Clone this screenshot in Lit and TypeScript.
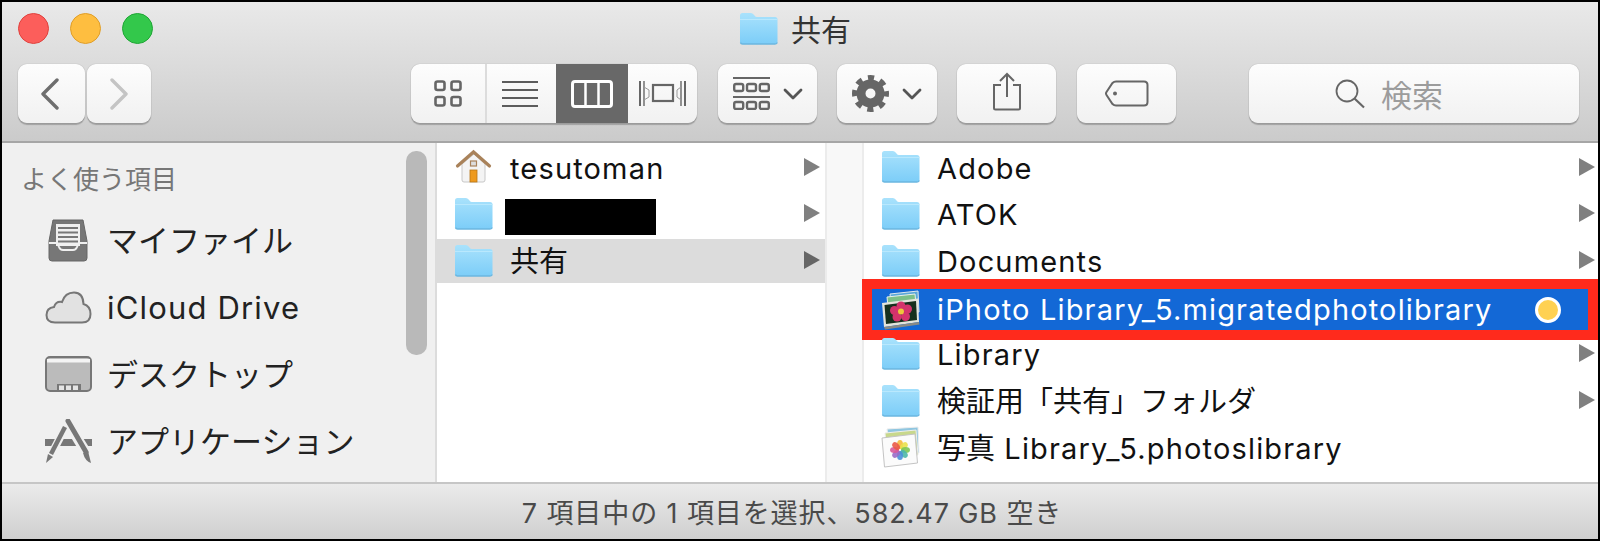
import { LitElement, html, svg, css } from "lit";
import { customElement } from "lit/decorators.js";

const folderIcon = html`<svg class="icon" width="39" height="33" viewBox="0 0 39 33">
  <defs>
    <linearGradient id="fg" x1="0" y1="0" x2="0" y2="1">
      <stop offset="0" stop-color="#a9e2fc" />
      <stop offset="1" stop-color="#7ccdf8" />
    </linearGradient>
  </defs>
  <path d="M1 3.5Q1 1 3.5 1H12Q14 1 15.5 3.5Q16.5 5 18 5H36Q38.500 5 38.500 7.500V29.500Q38.500 32 36 32H3.500Q1 32 1 29.500Z" fill="url(#fg)" />
  <path d="M1 7.500H38.500" stroke="#b9e8fd" stroke-width="1" />
  <path d="M1.500 30.500Q2 32 3.500 32H36Q38 32 38.200 30.500" stroke="#6bb7e0" stroke-width="1.500" fill="none" />
</svg>`;

const homeIcon = html`<svg class="icon" width="39" height="36" viewBox="0 0 39 36">
  <path d="M8 15L20 5L31 15V31Q31 33 29 33H10Q8 33 8 31Z" fill="#f4f4f4" stroke="#c8c8c8" />
  <path d="M3.500 17L19.500 3L35.500 17" fill="none" stroke="#a9825a" stroke-width="3.200" stroke-linecap="round" />
  <rect x="16.500" y="12" width="6" height="5" fill="#ddd" stroke="#a9825a" stroke-width="1.200" />
  <rect x="16" y="21" width="7" height="12" fill="#ee9a1e" stroke="#b87616" stroke-width=".8" />
</svg>`;

const iphotoIcon = html`<svg class="icon" width="39" height="40" viewBox="0 0 39 40">
  <path d="M9 4L37 1L38 22L11 24Z" fill="#5aa7d8" stroke="#dfe8ee" />
  <path d="M6 7L34 4L36 26L8 27Z" fill="#7cc08a" stroke="#e8f0ea" />
  <path d="M1 13L37 8.500L38 32L3 37Z" fill="#e4e4dc" />
  <path d="M3 37L38 32L38.500 34.500L4 39.500Z" fill="#8a8a84" />
  <path d="M3.500 15L35 11L36 30L5 34Z" fill="#16301e" />
  <g fill="#d4336c">
    <circle cx="20" cy="16" r="4.500" />
    <circle cx="13.500" cy="20.500" r="4.500" />
    <circle cx="26.500" cy="19" r="4.500" />
    <circle cx="16" cy="27" r="4.500" />
    <circle cx="24.500" cy="26.500" r="4.500" />
  </g>
  <circle cx="20" cy="21.500" r="3" fill="#f0c63c" />
</svg>`;

const petals: [number, string][] = [
  [0, "#f5b83c"], [45, "#e9e04c"], [90, "#7cc654"], [135, "#4cb7a8"],
  [180, "#4a8fd8"], [225, "#9a6cc8"], [270, "#d85a9a"], [315, "#ea5a48"],
];

const photosIcon = html`<svg class="icon" width="39" height="42" viewBox="0 0 39 42">
  <path d="M6 3L37 1L38 27L9 28Z" fill="#8fc6e0" stroke="#eee" />
  <path d="M4 7L35 4L37 29L6 31Z" fill="#c8d88c" stroke="#eee" />
  <path d="M1 12L34 8L36.500 37L3.500 41Z" fill="#fbfbfb" stroke="#c4c4c4" />
  ${petals.map(
    ([a, c]) => svg`<ellipse cx="19" cy="18.500" rx="3" ry="4.500" fill=${c} opacity=".9" transform="rotate(${a} 19 24)" />`
  )}
</svg>`;

const chevronDown = html`<svg class="chev" width="20" height="12" viewBox="0 0 20 12">
  <path d="M2 2L10 10L18 2" fill="none" stroke="#555" stroke-width="2.800" stroke-linecap="round" stroke-linejoin="round" />
</svg>`;

const arrow = html`<svg class="arrow" width="16" height="18" viewBox="0 0 16 18"><path d="M0 0L16 9L0 18Z" /></svg>`;

const sidebarIcons = {
  inbox: html`<svg width="42" height="43" viewBox="0 0 42 43">
    <path d="M6 1H36L40 22V39Q40 42 37 42H5Q2 42 2 39V22Z" fill="#777" stroke="#666" />
    <rect x="9" y="5" width="24" height="22" fill="#f0f0f0" />
    <path d="M11 9H31M11 13.500H31M11 18H31M11 22.500H31" stroke="#777" stroke-width="2" />
    <path d="M2 24H9Q11 24 12 28Q13 31 16 31H26Q29 31 30 28Q31 24 33 24H40" fill="none" stroke="#f0f0f0" stroke-width="2" />
  </svg>`,
  cloud: html`<svg width="47" height="33" viewBox="0 0 47 33">
    <path d="M10 31.500Q1.500 31.500 1.500 24Q1.500 17 9 16Q11 10 17 11Q20 1.500 29 1.500Q38 1.500 38.500 13Q45.500 15 45.500 23Q45.500 31.500 37 31.500Z" fill="#e2e2e2" stroke="#777" stroke-width="2" />
  </svg>`,
  desktop: html`<svg width="47" height="36" viewBox="0 0 47 36">
    <rect x="1" y="1" width="45" height="34" rx="4" fill="#bbb" stroke="#777" stroke-width="2" />
    <rect x="2" y="3" width="43" height="3.500" fill="#f4f4f4" />
    <rect x="12" y="28" width="24" height="7" fill="#777" />
    <path d="M14 29.500H19V34H14ZM21 29.500H26V34H21ZM28 29.500H33V34H28Z" fill="#e4e4e4" />
  </svg>`,
  apps: html`<svg width="47" height="45" viewBox="0 0 47 45">
    <path d="M0 20H47V27H0Z" fill="#777" />
    <path d="M7 34L21 7" stroke="#f0f0f0" stroke-width="8" />
    <path d="M21 1L44 38" stroke="#f0f0f0" stroke-width="10" />
    <path d="M6 35L20 8" stroke="#777" stroke-width="4.500" />
    <path d="M1 44L3 35L8 38Z" fill="#777" />
    <path d="M23 2L41 33" stroke="#777" stroke-width="5" stroke-linecap="round" />
    <path d="M38 34L43 32L46 44Q40 42 38 34Z" fill="#777" />
  </svg>`,
};

// Latin runs are tracked wider than the kana and kanji around them
const tracked = (label: string) =>
  label
    .split(/([\u3000-\u9fff]+)/)
    .filter(Boolean)
    .map((run) =>
      /[\u3000-\u9fff]/.test(run) ? html`<span>${run}</span>` : html`<span class="latin">${run}</span>`
    );

const favourites = [
  { icon: sidebarIcons.inbox, label: "マイファイル" },
  { icon: sidebarIcons.cloud, label: "iCloud Drive" },
  { icon: sidebarIcons.desktop, label: "デスクトップ" },
  { icon: sidebarIcons.apps, label: "アプリケーション" },
];

const secondColumn = [
  { icon: folderIcon, label: "Adobe", more: true },
  { icon: folderIcon, label: "ATOK", more: true },
  { icon: folderIcon, label: "Documents", more: true },
  { icon: iphotoIcon, label: "iPhoto Library_5.migratedphotolibrary", selected: true },
  { icon: folderIcon, label: "Library", more: true },
  { icon: folderIcon, label: "検証用「共有」フォルダ", more: true },
  { icon: photosIcon, label: "写真 Library_5.photoslibrary" },
];

@customElement("app-root")
export class AppRoot extends LitElement {
  override render() {
    return html`
      <div class="window">
        <header class="toolbar">
          <div class="titlebar">
            <div class="lights">
              <span class="light red"></span>
              <span class="light yellow"></span>
              <span class="light green"></span>
            </div>
            <div class="title">${folderIcon}<span>共有</span></div>
          </div>
          <div class="tools">
            <div class="btn back">
              <svg width="20" height="32" viewBox="0 0 20 32"><path d="M17 2L3 16L17 30" fill="none" stroke="#6e6e6e" stroke-width="3.400" stroke-linecap="round" stroke-linejoin="round" /></svg>
            </div>
            <div class="btn forward">
              <svg width="20" height="32" viewBox="0 0 20 32"><path d="M3 2L17 16L3 30" fill="none" stroke="#c4c4c4" stroke-width="3.400" stroke-linecap="round" stroke-linejoin="round" /></svg>
            </div>
            <div class="btn views">
              <div class="seg icons">
                <svg width="28" height="27" viewBox="0 0 28 27">
                  <g fill="none" stroke="#666" stroke-width="2.600">
                    <rect x="1.500" y="1.500" width="9" height="8.500" rx="2" />
                    <rect x="17.500" y="1.500" width="9" height="8.500" rx="2" />
                    <rect x="1.500" y="17" width="9" height="8.500" rx="2" />
                    <rect x="17.500" y="17" width="9" height="8.500" rx="2" />
                  </g>
                </svg>
              </div>
              <div class="seg list">
                <svg width="36" height="28" viewBox="0 0 36 28"><path d="M0 2H36M0 10H36M0 18H36M0 26H36" stroke="#5c5c5c" stroke-width="2" /></svg>
              </div>
              <div class="seg columns">
                <svg width="42" height="28" viewBox="0 0 42 28">
                  <rect x="1.500" y="1.500" width="39" height="25" rx="2.500" fill="none" stroke="#fff" stroke-width="3" />
                  <path d="M14.500 2V26M27.500 2V26" stroke="#fff" stroke-width="2.500" />
                </svg>
              </div>
              <div class="seg cover">
                <svg width="47" height="27" viewBox="0 0 47 27">
                  <rect x="14" y="5" width="20" height="16" fill="none" stroke="#666" stroke-width="2.200" />
                  <path d="M1 1V26M46 1V26" stroke="#666" stroke-width="2" />
                  <path d="M5 1V26M42 1V26" stroke="#666" stroke-width="1.400" />
                  <path d="M5 7L10 10V17L5 20M42 7L38 10V17L42 20" fill="none" stroke="#999" stroke-width="1" />
                </svg>
              </div>
            </div>
            <div class="btn arrange">
              <svg width="37" height="33" viewBox="0 0 37 33">
                <path d="M0 1H37M0 20H37" stroke="#666" stroke-width="2" />
                <g fill="none" stroke="#666" stroke-width="2.400">
                  <rect x="1.200" y="7" width="9" height="7" rx="1.800" />
                  <rect x="14" y="7" width="9" height="7" rx="1.800" />
                  <rect x="26.800" y="7" width="9" height="7" rx="1.800" />
                  <rect x="1.200" y="25" width="9" height="7" rx="1.800" />
                  <rect x="14" y="25" width="9" height="7" rx="1.800" />
                  <rect x="26.800" y="25" width="9" height="7" rx="1.800" />
                </g>
              </svg>
              ${chevronDown}
            </div>
            <div class="btn action">
              <svg width="37" height="37" viewBox="0 0 37 37">
                <circle cx="18.500" cy="18.500" r="9.500" fill="none" stroke="#666" stroke-width="9" />
                <circle cx="18.500" cy="18.500" r="15.500" fill="none" stroke="#666" stroke-width="6" stroke-dasharray="6.090 6.090" stroke-dashoffset="3.040" />
              </svg>
              ${chevronDown}
            </div>
            <div class="btn share">
              <svg width="30" height="39" viewBox="0 0 30 39">
                <path d="M9 13H2V36Q2 37.500 3.500 37.500H26.500Q28 37.500 28 36V13H21" fill="none" stroke="#666" stroke-width="2" />
                <path d="M15 2V25M8 9L15 2L22 9" fill="none" stroke="#666" stroke-width="2" />
              </svg>
            </div>
            <div class="btn tag">
              <svg width="44" height="27" viewBox="0 0 44 27">
                <path d="M11 1.500H39Q42.500 1.500 42.500 5V22Q42.500 25.500 39 25.500H11Q9 25.500 7.500 24L1.500 15Q0.500 13.500 1.500 12L7.500 3Q9 1.500 11 1.500Z" fill="none" stroke="#666" stroke-width="2" />
                <circle cx="10" cy="13.500" r="2" fill="#666" />
              </svg>
            </div>
            <div class="btn search">
              <svg width="30" height="30" viewBox="0 0 30 30">
                <circle cx="12" cy="12" r="10.500" fill="none" stroke="#666" stroke-width="1.800" />
                <path d="M19.500 19.500L29 28.500" stroke="#666" stroke-width="2.200" />
              </svg>
              <span>検索</span>
            </div>
          </div>
        </header>

        <div class="main">
          <aside class="sidebar">
            <div class="side-head">よく使う項目</div>
            ${favourites.map(
              (f) => html`<div class="side-item"><span class="side-icon">${f.icon}</span><span class="side-label">${tracked(f.label)}</span></div>`
            )}
            <div class="scrollbar"></div>
          </aside>

          <section class="column first">
            <div class="row">${homeIcon}<span class="name">${tracked("tesutoman")}</span>${arrow}</div>
            <div class="row">${folderIcon}<span class="redacted"></span>${arrow}</div>
            <div class="row current">${folderIcon}<span class="name">共有</span>${arrow}</div>
          </section>

          <div class="gutter"></div>

          <section class="column second">
            ${secondColumn.map((r) =>
              r.selected
                ? html`<div class="row">
                    <div class="selected">
                      ${r.icon}<span class="name">${tracked(r.label)}</span><span class="dot"></span>
                    </div>
                  </div>`
                : html`<div class="row">${r.icon}<span class="name">${tracked(r.label)}</span>${r.more ? arrow : ""}</div>`
            )}
          </section>
        </div>

        <footer class="status">7 項目中の 1 項目を選択、582.47 GB 空き</footer>
      </div>
    `;
  }

  static styles = css`
    * {
      box-sizing: border-box;
    }

    :host {
      display: block;
      font-family: Inter, "Noto Sans CJK JP", sans-serif;
      color: #111;
    }

    .window {
      display: flex;
      flex-direction: column;
      height: 541px;
      border: 2px solid #000;
      background: #fff;
      overflow: hidden;
    }

    .toolbar {
      height: 141px;
      flex: none;
      background: linear-gradient(#e9e9e9, #cbcbcb);
      border-bottom: 2px solid #a6a6a6;
    }

    .titlebar {
      position: relative;
      display: flex;
      justify-content: center;
      height: 62px;
      padding-top: 10px;
    }

    .lights {
      position: absolute;
      left: 16px;
      top: 11px;
      display: flex;
      gap: 21px;
    }

    .light {
      width: 31px;
      height: 31px;
      border-radius: 50%;
      border: 1px solid;
    }

    .red {
      background: #fc5e5b;
      border-color: #e0423e;
    }

    .yellow {
      background: #febe40;
      border-color: #e09e28;
    }

    .green {
      background: #33c84b;
      border-color: #1fa635;
    }

    .title {
      display: flex;
      align-items: flex-start;
      gap: 13px;
      margin-left: -10px;
      font-size: 30px;
      line-height: 36px;
      color: #333;
    }

    .tools {
      display: flex;
      padding-left: 16px;
    }

    .btn {
      display: flex;
      align-items: center;
      justify-content: center;
      height: 59px;
      border-radius: 9px;
      background: linear-gradient(#fdfdfd, #f1f1f1);
      box-shadow: 0 0 1px rgba(0, 0, 0, 0.35), 0 1.500px 1px rgba(0, 0, 0, 0.22);
    }

    .back {
      width: 67px;
      margin-right: 2px;
      padding-right: 3px;
    }

    .forward {
      width: 64px;
      margin-right: 260px;
    }

    .views {
      width: 286px;
      margin-right: 21px;
      overflow: hidden;
    }

    .seg {
      display: flex;
      align-items: center;
      justify-content: center;
      height: 100%;
    }

    .icons {
      width: 76px;
      border-right: 2px solid #dcdcdc;
    }

    .list {
      width: 69px;
      padding-right: 3px;
    }

    .columns {
      width: 72px;
      background: #686868;
    }

    .cover {
      width: 69px;
    }

    .arrange {
      width: 99px;
      gap: 13px;
      margin-right: 20px;
    }

    .action {
      width: 100px;
      gap: 13px;
      margin-right: 20px;
    }

    .share {
      width: 99px;
      margin-right: 21px;
      padding-bottom: 5px;
    }

    .tag {
      width: 99px;
      margin-right: 73px;
    }

    .search {
      width: 330px;
      gap: 16px;
      padding-right: 50px;
      font-size: 31px;
      color: #9c9c9c;
    }

    .main {
      flex: 1;
      display: flex;
      min-height: 0;
    }

    .sidebar {
      position: relative;
      width: 435px;
      flex: none;
      overflow: hidden;
      background: #f0f0f0;
      border-right: 2px solid #dcdcdc;
      font-size: 31px;
      color: #222;
    }

    .side-head {
      height: 63.500px;
      padding: 19px 0 0 19px;
      font-size: 26px;
      line-height: 36px;
      color: #777;
    }

    .side-item {
      display: flex;
      align-items: center;
      height: 67px;
      padding-left: 42px;
    }

    .side-icon {
      display: flex;
      justify-content: center;
      width: 48px;
      margin-right: 15px;
    }

    .side-label {
      position: relative;
      top: 1px;
      line-height: 38px;
    }

    .scrollbar {
      position: absolute;
      left: 404px;
      top: 8px;
      width: 21px;
      height: 204px;
      border-radius: 10px;
      background: #b9b9b9;
    }

    .column {
      padding-top: 0.500px;
      font-size: 29px;
    }

    .latin {
      letter-spacing: 1.160px;
    }

    .first {
      width: 388px;
      flex: none;
    }

    .gutter {
      width: 39px;
      flex: none;
      background: #f8f8f8;
      border-left: 2px solid #ececec;
      border-right: 2px solid #ececec;
    }

    .second {
      flex: 1;
      min-width: 0;
    }

    .row {
      display: flex;
      align-items: center;
      height: 46.670px;
      padding: 0 3px 0 17px;
    }

    .first .row {
      padding-right: 5px;
    }

    .current {
      background: linear-gradient(transparent 2px, #dcdcdc 2px, #dcdcdc 46px, transparent 46px);
    }

    .current .arrow {
      fill: #666;
    }

    .icon {
      flex: none;
    }

    .name {
      margin-left: 17px;
      position: relative;
      top: 2px;
      line-height: 36px;
      white-space: nowrap;
    }

    .arrow {
      flex: none;
      margin-left: auto;
      fill: #808080;
    }

    .redacted {
      width: 151px;
      height: 36px;
      margin: 8px 0 0 12px;
      background: #000;
    }

    .selected {
      display: flex;
      align-items: center;
      flex: 1;
      height: 41px;
      margin: 5.500px 7px 0 -9px;
      padding-left: 9px;
      background: #1368d6;
      color: #fff;
      outline: 10px solid #ff2a1c;
    }

    .selected .name {
      top: 0;
    }

    .dot {
      width: 26px;
      height: 26px;
      margin-left: auto;
      margin-right: 27px;
      border-radius: 50%;
      background: #ffd152;
      border: 3px solid #fff;
    }

    .status {
      flex: none;
      height: 57px;
      padding-right: 16px;
      display: flex;
      align-items: center;
      justify-content: center;
      font-size: 27px;
      letter-spacing: 0.900px;
      color: #4a4a4a;
      background: linear-gradient(#ebebeb, #cfcfcf);
      border-top: 2px solid #c6c6c6;
    }
  `;
}
